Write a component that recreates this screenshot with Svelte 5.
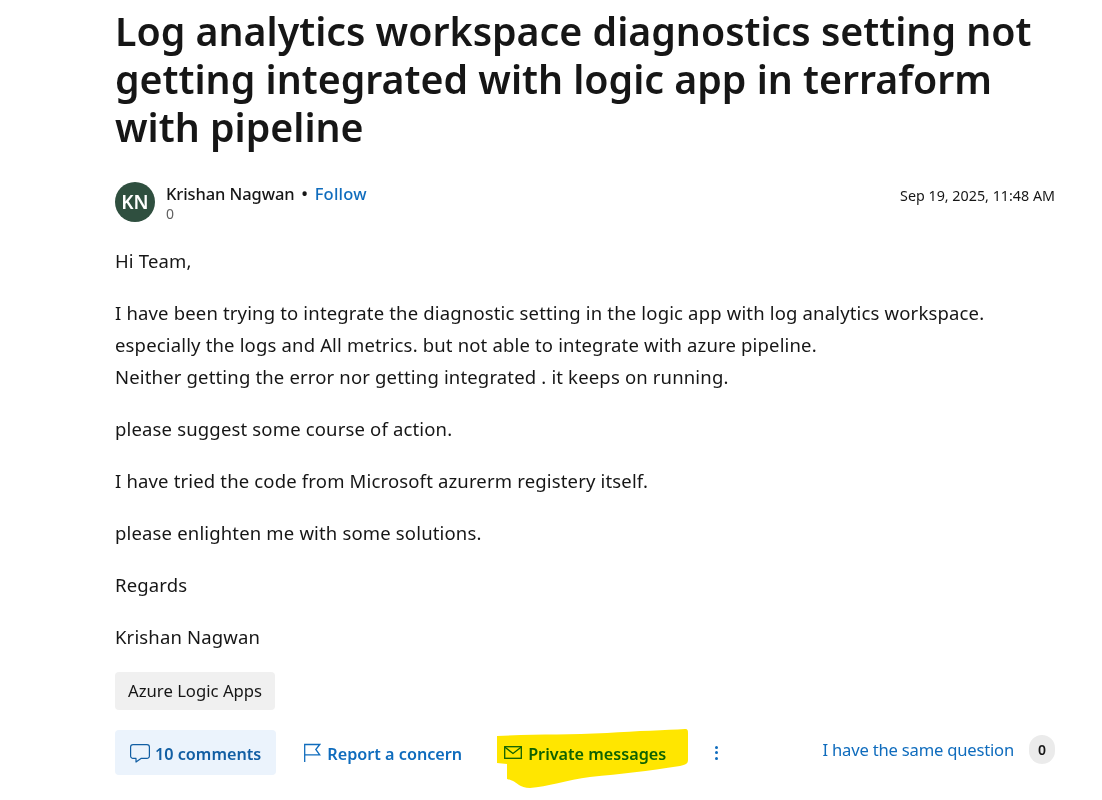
<script lang="ts">
  const paragraphs = [
    ['Hi Team,'],
    [
      'I have been trying to integrate the diagnostic setting in the logic app with log analytics workspace.',
      'especially the logs and All metrics. but not able to integrate with azure pipeline.',
      'Neither getting the error nor getting integrated . it keeps on running.'
    ],
    ['please suggest some course of action.'],
    ['I have tried the code from Microsoft azurerm registery itself.'],
    ['please enlighten me with some solutions.'],
    ['Regards'],
    ['Krishan Nagwan']
  ]
</script>

<main class="post">
  <h1>Log analytics workspace diagnostics setting not getting integrated with logic app in terraform with pipeline</h1>

  <div class="meta">
    <div class="avatar">KN</div>
    <div class="who">
      <div class="name-line">
        <span class="name">Krishan Nagwan</span>
        <span class="dot">•</span>
        <a class="follow" href="#follow">Follow</a>
      </div>
      <div class="rep">0</div>
    </div>
    <time>Sep 19, 2025, 11:48 AM</time>
  </div>

  <div class="body">
    {#each paragraphs as lines}
      <p>
        {#each lines as line, i}
          {#if i > 0}<br />{/if}{line}
        {/each}
      </p>
    {/each}
  </div>

  <a class="tag" href="#tag">Azure Logic Apps</a>

  <div class="actions">
    <a class="action comments" href="#comments">
      <svg width="20" height="20" viewBox="0 0 20 20" fill="none" stroke="currentColor" stroke-width="1.2">
        <path d="M3 1.600h14a2.400 2.400 0 0 1 2.400 2.400v9a2.400 2.400 0 0 1-2.400 2.400h-6l-5 3.600v-3.600H3A2.400 2.400 0 0 1 .6 13V4A2.400 2.400 0 0 1 3 1.600z" stroke-linejoin="round" />
      </svg>
      <span>10 comments</span>
    </a>
    <a class="action report" href="#report">
      <svg width="18" height="20" viewBox="0 0 18 20" fill="none" stroke="currentColor" stroke-width="1.300">
        <path d="M1.700 19V1.500h15l-3.900 5 3.900 5.300H1.700" stroke-linejoin="miter" />
      </svg>
      <span>Report a concern</span>
    </a>
    <div class="pm-wrap">
      <a class="action pm" href="#pm">
        <svg width="18" height="13" viewBox="0 0 18 13" fill="none" stroke="currentColor" stroke-width="1.300">
          <rect x="0.700" y="0.700" width="16.600" height="11.600" />
          <path d="M1 1.200l8 6.300 8-6.300" />
        </svg>
        <span>Private messages</span>
      </a>
      <!-- the yellow marker scribble lying over the link -->
      <svg class="scribble" width="192" height="60" viewBox="0 0 192 60">
        <path d="M0 7C40 5 70 6 110 4 C140 2 170 1 188 0 C191 0 191 2 191 4 L191 31 C191 35 188 36 183 37 C150 42 125 45 93 48 C70 51 50 58 33 59 C28 59 24 57 22 56 C17 52 14 51 10 50 L10 35 L0 34Z" fill="#ffe600" />
      </svg>
    </div>
    <button class="more" aria-label="More">
      <span></span><span></span><span></span>
    </button>
    <div class="same">
      <a href="#same">I have the same question</a>
      <span class="count">0</span>
    </div>
  </div>
</main>

<style>
  :global(body) {
    margin: 0;
    background: #fff;
  }
  .post {
    box-sizing: border-box;
    width: 1102px;
    height: 800px;
    overflow: hidden;
    padding: 7px 47px 0 115px;
    font-family: "Noto Sans", "Open Sans", sans-serif;
    color: #161616;
  }
  h1 {
    margin: 0;
    font-size: 39.300px;
    line-height: 48px;
    font-weight: 600;
    color: #161616;
  }
  .meta {
    display: flex;
    align-items: flex-start;
    margin-top: 31px;
    height: 44px;
  }
  .avatar {
    width: 40px;
    height: 40px;
    border-radius: 50%;
    background: #2f4f3f;
    color: #fff;
    font-size: 19px;
    font-weight: 600;
    display: flex;
    align-items: center;
    justify-content: center;
  }
  .who {
    margin-left: 11px;
  }
  .name-line {
    display: flex;
    gap: 7px;
    align-items: center;
    font-size: 16.500px;
    line-height: 24px;
  }
  .name {
    font-weight: 500;
    letter-spacing: -0.1px;
  }
  .dot {
    font-weight: 600;
  }
  .follow {
    color: #0f6cbd;
    text-decoration: none;
    font-weight: 500;
    letter-spacing: 0.2px;
  }
  .rep {
    font-size: 14px;
    line-height: 16px;
    color: #616161;
  }
  time {
    margin-left: auto;
    margin-top: 4px;
    font-size: 14.300px;
    line-height: 20px;
  }
  .body {
    margin-top: 19px;
    font-size: 18.500px;
    letter-spacing: 0.16px;
  }
  p {
    margin: 0 0 20px;
    line-height: 32px;
  }
  .tag {
    display: inline-block;
    margin-top: -1px;
    padding: 0 13px;
    height: 38px;
    line-height: 38px;
    background: #f0f0f0;
    border-radius: 4px;
    color: #161616;
    text-decoration: none;
    font-size: 16.700px;
  }
  .actions {
    display: flex;
    align-items: center;
    margin-top: 20px;
    height: 45px;
  }
  .action {
    display: flex;
    align-items: center;
    gap: 5px;
    color: #0f6cbd;
    text-decoration: none;
    font-size: 16.200px;
    font-weight: 600;
  }
  .action span {
    padding-top: 2px;
  }
  .comments {
    height: 45px;
    padding: 0 15px;
    background: #ebf3fc;
    border-radius: 4px;
    color: #115ea3;
  }
  .report {
    margin-left: 27px;
    gap: 6px;
  }
  .pm-wrap {
    position: relative;
    margin-left: 42px;
  }
  .pm {
    gap: 6px;
  }
  .scribble {
    position: absolute;
    left: -7px;
    top: -12px;
    mix-blend-mode: multiply;
    pointer-events: none;
  }
  .more {
    display: flex;
    flex-direction: column;
    gap: 2.500px;
    border: 0;
    background: none;
    padding: 0;
    margin-left: 49px;
  }
  .more span {
    width: 3px;
    height: 3px;
    border-radius: 50%;
    background: #0f6cbd;
  }
  .same {
    margin-left: auto;
    display: flex;
    align-items: center;
    gap: 15px;
    margin-top: -6px;
    font-size: 16.600px;
    letter-spacing: -0.2px;
  }
  .same a {
    color: #0f6cbd;
    text-decoration: none;
  }
  .count {
    width: 26px;
    height: 29px;
    border-radius: 14.500px;
    background: #ebebeb;
    font-size: 14px;
    font-weight: 600;
    display: flex;
    align-items: center;
    justify-content: center;
  }
</style>
